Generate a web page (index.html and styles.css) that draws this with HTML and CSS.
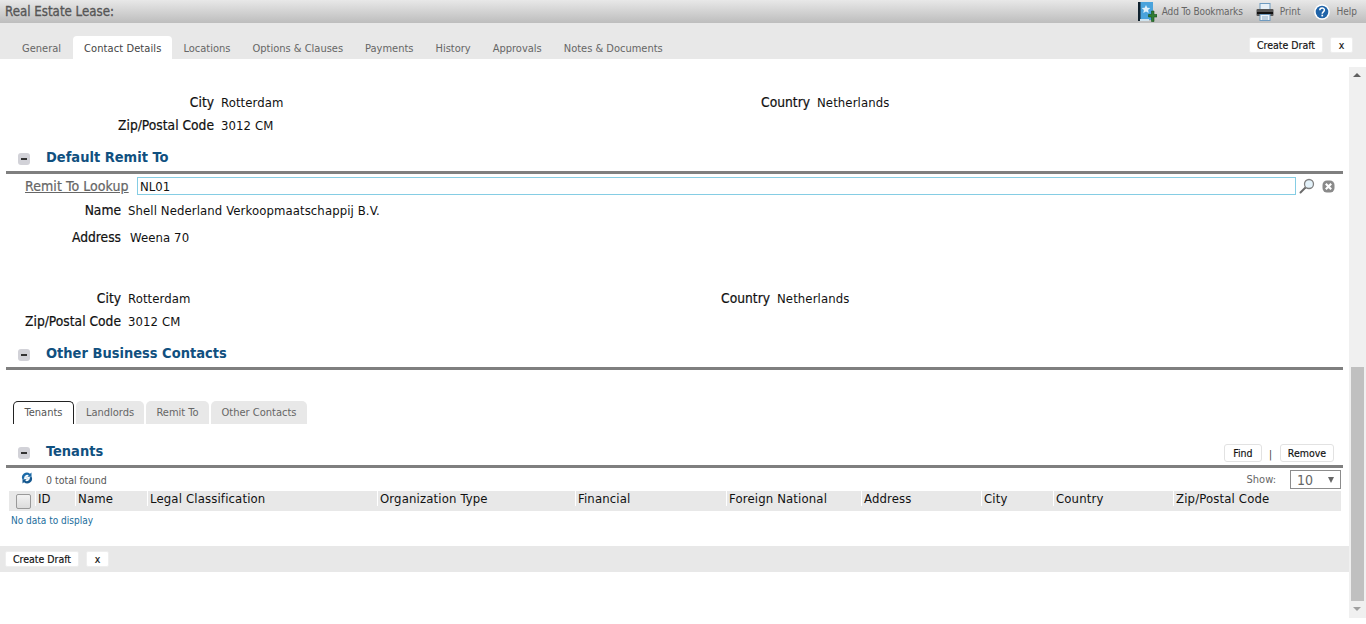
FILE: index.html
```html
<!DOCTYPE html>
<html lang="en">
<head>
    <meta charset="UTF-8">
    <meta name="viewport" content="width=device-width, initial-scale=1.0">
    <title>Real Estate Lease</title>
    <link rel="stylesheet" href="styles.css">
</head>
<body>
    <header class="topbar">
        <div class="page-title">Real Estate Lease:</div>
        <div class="top-links">
            <a class="top-link top-link-book">
                <svg width="19" height="20" viewBox="0 0 19 20"><rect x="1" y="0" width="14" height="18" fill="#4aa3dc"/><rect x="0" y="0" width="2.500" height="19" fill="#10222f"/><rect x="2" y="17" width="9" height="2" fill="#cfe3ef"/><path d="M8 3l1.300 2.800 3 .3-2.200 2 .6 3-2.700-1.500-2.700 1.500.6-3-2.200-2 3-.3z" fill="#dff0fa"/><path d="M10.500 12.500h3v-3.500h2.500v3.500h3v2.500h-3v4.500h-2.500v-4.500h-3z" fill="#2f7d32" stroke="#17501b" stroke-width=".6"/></svg>
                <span class="top-link-text">Add To Bookmarks</span>
            </a>
            <a class="top-link top-link-print">
                <svg width="18" height="18" viewBox="0 0 18 18"><rect x="4" y="0.500" width="10" height="6" fill="#e6eff6" stroke="#6f9bc0"/><rect x="0.500" y="6" width="17" height="7" rx="1" fill="#565656"/><rect x="1" y="9" width="16" height="2" fill="#111"/><rect x="4" y="11.500" width="10" height="6" fill="#eef4f9" stroke="#6f9bc0"/><path d="M6 14h6M6 16h6" stroke="#8aa9c4"/></svg>
                <span class="top-link-text">Print</span>
            </a>
            <a class="top-link top-link-help">
                <svg width="16" height="16" viewBox="0 0 16 16"><circle cx="8" cy="8" r="7.800" fill="#fff"/><circle cx="8" cy="8" r="6.300" fill="#1f63a8"/><path d="M5.800 6.300c0-3 4.600-3 4.600-.2 0 1.800-2.200 1.800-2.200 3.600" fill="none" stroke="#fff" stroke-width="1.500"/><rect x="7.400" y="10.700" width="1.700" height="1.700" fill="#fff"/></svg>
                <span class="top-link-text">Help</span>
            </a>
        </div>
    </header>

    <nav class="tabbar">
        <div class="tabs">
            <a class="tab">General</a>
            <a class="tab tab-active">Contact Details</a>
            <a class="tab">Locations</a>
            <a class="tab">Options &amp; Clauses</a>
            <a class="tab">Payments</a>
            <a class="tab">History</a>
            <a class="tab">Approvals</a>
            <a class="tab">Notes &amp; Documents</a>
        </div>
        <div class="actions">
            <button class="btn btn-draft">Create Draft</button>
            <button class="btn btn-x">x</button>
        </div>
    </nav>

    <div class="body-wrap">
        <main class="content">
            <div class="field-row row-first">
                <span class="label label-wide">City</span>
                <span class="value value-wide">Rotterdam</span>
                <span class="label label-second-wide">Country</span>
                <span class="value">Netherlands</span>
            </div>
            <div class="field-row row-zip">
                <span class="label label-wide">Zip/Postal Code</span>
                <span class="value">3012 CM</span>
            </div>

            <section class="section-head head-remit">
                <span class="toggle"></span>
                <h2>Default Remit To</h2>
            </section>
            <div class="lookup-row">
                <a class="lookup-label">Remit To Lookup</a>
                <input class="lookup-input" type="text" value="NL01">
                <svg class="lookup-icon" width="16" height="16" viewBox="0 0 16 16"><path d="M6.500 9.500L1.500 14.500" stroke="#6b6b6b" stroke-width="2" stroke-linecap="round"/><circle cx="10" cy="6" r="4.500" fill="#e4f2fa" stroke="#808080" stroke-width="1.300"/></svg>
                <svg class="clear-icon" width="13" height="13" viewBox="0 0 13 13"><rect x="0.500" y="0.500" width="12" height="12" rx="4.500" fill="#8a8a8a"/><path d="M3.800 3.800l5.400 5.400M9.200 3.800l-5.400 5.400" stroke="#fff" stroke-width="2.200"/></svg>
            </div>
            <div class="field-row row-name">
                <span class="label label-narrow">Name</span>
                <span class="value">Shell Nederland Verkoopmaatschappij B.V.</span>
            </div>
            <div class="field-row row-address">
                <span class="label label-narrow">Address</span>
                <span class="value value-address">Weena 70</span>
            </div>
            <div class="field-row row-city">
                <span class="label label-narrow">City</span>
                <span class="value value-narrow">Rotterdam</span>
                <span class="label label-second-narrow">Country</span>
                <span class="value">Netherlands</span>
            </div>
            <div class="field-row row-zip">
                <span class="label label-narrow">Zip/Postal Code</span>
                <span class="value">3012 CM</span>
            </div>

            <section class="section-head head-other">
                <span class="toggle"></span>
                <h2>Other Business Contacts</h2>
            </section>

            <div class="subtabs">
                <a class="subtab subtab-active">Tenants</a>
                <a class="subtab subtab-landlords">Landlords</a>
                <a class="subtab subtab-remit">Remit To</a>
                <a class="subtab subtab-other">Other Contacts</a>
            </div>

            <section class="section-head head-tenants">
                <span class="toggle"></span>
                <h2>Tenants</h2>
                <div class="head-actions">
                    <button class="btn btn-outline btn-find">Find</button>
                    <span class="sep">|</span>
                    <button class="btn btn-outline btn-remove">Remove</button>
                </div>
            </section>

            <div class="list-info">
                <svg class="refresh" width="12" height="12" viewBox="0 0 12 12"><path d="M1.500 7.500A4.800 4.800 0 0 1 9 1.800L10.500 .5v4.200H6.300L7.800 3.300A3 3 0 0 0 3.300 6.500z" fill="#1b6aa8"/><path d="M10.500 4.500A4.800 4.800 0 0 1 3 10.200L1.500 11.500V7.300H5.700L4.200 8.700A3 3 0 0 0 8.700 5.500z" fill="#15588f"/><path d="M4.500 4.500l3 3" stroke="#cfe3ef" stroke-width="1.200"/></svg>
                <span class="total">0 total found</span>
                <span class="show-label">Show:</span>
                <div class="show-select"><span>10</span><span class="caret"></span></div>
            </div>

            <div class="grid-head">
                <div class="col col-check"><span class="checkbox"></span></div>
                <div class="col col-id">ID</div>
                <div class="col col-name">Name</div>
                <div class="col col-legal">Legal Classification</div>
                <div class="col col-org">Organization Type</div>
                <div class="col col-fin">Financial</div>
                <div class="col col-foreign">Foreign National</div>
                <div class="col col-addr">Address</div>
                <div class="col col-city">City</div>
                <div class="col col-country">Country</div>
                <div class="col col-zip">Zip/Postal Code</div>
            </div>
            <div class="no-data">No data to display</div>
        </main>

        <div class="scrollbar">
            <span class="arrow arrow-up"></span>
            <div class="track"><div class="thumb"></div></div>
            <span class="arrow arrow-down"></span>
        </div>
    </div>

    <footer class="footbar">
        <button class="btn btn-draft">Create Draft</button>
        <button class="btn btn-x">x</button>
    </footer>
</body>
</html>
```

FILE: styles.css
```css
body {
    margin: 0;
    width: 1366px;
    height: 624px;
    overflow: hidden;
    background-color: #fff;
    font-family: "DejaVu Sans Condensed", "DejaVu Sans", sans-serif;
    font-size: 12px;
    color: #111;
}

/* top bar */
.topbar {
    height: 23px;
    display: flex;
    justify-content: space-between;
    align-items: center;
    background: linear-gradient(#e8e8e8, #bdbdbd);
}
.page-title {
    margin-left: 5px;
    font-size: 13.200px;
    color: #555;
    -webkit-text-stroke: 0.3px #555;
}
.top-links {
    display: flex;
    align-items: center;
    margin-right: 9px;
}
.top-link {
    display: flex;
    align-items: center;
    margin-left: 13px;
}
.top-link svg {
    margin-right: 5px;
}
.top-link-book .top-link-text {
    letter-spacing: -0.1px;
}
.top-link-print svg {
    margin-right: 6px;
}
.top-link-help {
    margin-left: 14px;
}
.top-link-help svg {
    margin-right: 6px;
}
.top-link-text {
    font-size: 10px;
    color: #666;
}

/* main tabs */
.tabbar {
    height: 36px;
    display: flex;
    justify-content: space-between;
    align-items: flex-end;
    background-color: #e8e8e8;
}
.tabs {
    display: flex;
    margin-left: 11px;
}
.tab {
    height: 23px;
    line-height: 25px;
    padding: 0 11px;
    font-size: 11px;
    color: #666;
    border-radius: 4px 4px 0 0;
}
.tab-active {
    margin-left: 1px;
    letter-spacing: 0.1px;
    background-color: #fff;
    color: #444;
}
.actions {
    display: flex;
    gap: 7px;
    margin: 0 13px 6px 0;
}
.btn {
    height: 16px;
    padding: 0;
    border: 1px solid #eee;
    border-radius: 2px;
    background-color: #fff;
    font-family: inherit;
    font-size: 10.500px;
    color: #111;
    -webkit-text-stroke: 0.15px #111;
}
.btn-draft {
    width: 74px;
}
.btn-x {
    width: 23px;
}

/* body */
.body-wrap {
    display: flex;
    height: 487px;
}
.content {
    width: 1349px;
}
.scrollbar {
    width: 17px;
    margin-top: 8px;
    height: 551px;
    display: flex;
    flex-direction: column;
    background-color: #f0f0f0;
    position: relative;
    z-index: 2;
}
.track {
    flex: 1;
    display: flex;
    align-items: flex-end;
    padding: 0 2px;
}
.thumb {
    width: 100%;
    height: 234px;
    background-color: #c0c0c0;
}
.arrow {
    height: 17px;
    position: relative;
}
.arrow::after {
    content: "";
    position: absolute;
    left: 4px;
    top: 6px;
    border-left: 4px solid transparent;
    border-right: 4px solid transparent;
}
.arrow-up::after {
    border-bottom: 4px solid #606060;
}
.arrow-down::after {
    border-top: 4px solid #a0a0a0;
}

/* field rows */
.field-row {
    display: flex;
    font-size: 13px;
    line-height: 16px;
    letter-spacing: 0.1px;
}
.label {
    font-size: 13.700px;
    line-height: 14px;
    letter-spacing: 0;
    text-align: right;
    margin-right: 7px;
    flex-shrink: 0;
    -webkit-text-stroke: 0.2px #111;
}
.label-wide {
    width: 214px;
}
.value-wide {
    width: 396px;
}
.label-second-wide {
    width: 193px;
}
.label-narrow {
    width: 121px;
}
.value-narrow {
    width: 396px;
    flex-shrink: 0;
}
.label-second-narrow {
    width: 246px;
}
.row-first {
    margin-top: 36px;
}
.row-zip {
    margin-top: 7px;
}
.row-name {
    margin-top: 7px;
}
.row-address {
    margin-top: 11px;
}
.value-address {
    margin-left: 2px;
}
.row-city {
    margin-top: 45px;
}

/* section heads */
.section-head {
    display: flex;
    align-items: center;
    height: 24px;
    margin: 0 6px 0 6px;
    padding-left: 12px;
    border-bottom: 3px solid #7f7f7f;
}
.section-head h2 {
    margin: 0 0 4px 16px;
    font-size: 14.500px;
    font-weight: bold;
    color: #10507f;
}
.toggle {
    width: 12px;
    height: 12px;
    border-radius: 3px;
    background-color: #d2d2d8;
    position: relative;
}
.toggle::after {
    content: "";
    position: absolute;
    left: 3px;
    top: 5px;
    width: 6px;
    height: 2px;
    background-color: #333;
}
.head-remit {
    margin-top: 13px;
}
.head-other {
    margin-top: 13px;
}

/* lookup */
.lookup-row {
    display: flex;
    align-items: center;
    height: 22px;
    box-sizing: border-box;
    padding: 2px 0 0 25px;
}
.lookup-label {
    width: 112px;
    flex-shrink: 0;
    font-size: 14px;
    letter-spacing: 0.07px;
    color: #666;
    text-decoration: underline;
    -webkit-text-stroke: 0.2px #666;
}
.lookup-input {
    width: 1159px;
    height: 18px;
    box-sizing: border-box;
    padding: 0 2px;
    border: 1px solid #85cde4;
    font-family: inherit;
    font-size: 13px;
    color: #111;
}
.lookup-icon {
    margin-left: 3px;
}
.clear-icon {
    margin-left: 7px;
}

/* sub tabs */
.subtabs {
    display: flex;
    gap: 2px;
    margin: 31px 0 0 13px;
}
.subtab {
    height: 23px;
    line-height: 24px;
    text-align: center;
    box-sizing: border-box;
    background-color: #e8e8e8;
    border-radius: 5px 5px 0 0;
    font-size: 11px;
    color: #666;
}
.subtab-active {
    width: 61px;
    background-color: #fff;
    border: 1px solid #222;
    border-bottom: none;
    line-height: 22px;
    color: #555;
}
.subtab-landlords {
    width: 68px;
}
.subtab-remit {
    width: 63px;
}
.subtab-other {
    width: 96px;
}

/* tenants */
.head-tenants {
    margin-top: 17px;
}
.head-actions {
    margin-left: auto;
    margin-right: 9px;
    display: flex;
    align-items: center;
}
.btn-outline {
    height: 18px;
    border: 1px solid #e2e2e2;
    border-radius: 3px;
}
.btn-find {
    width: 38px;
}
.btn-remove {
    width: 54px;
}
.sep {
    margin: 3px 8px 0 7px;
    font-size: 10px;
    color: #333;
}
.list-info {
    display: flex;
    align-items: center;
    height: 23px;
    padding-left: 21px;
}
.refresh {
    margin-bottom: 3px;
}
.total {
    margin-left: 13px;
    font-size: 10.500px;
    color: #555;
}
.show-label {
    margin-left: auto;
    font-size: 11px;
    color: #666;
}
.show-select {
    width: 51px;
    height: 19px;
    box-sizing: border-box;
    margin: 0 8px 0 14px;
    padding: 0 6px;
    display: flex;
    justify-content: space-between;
    align-items: center;
    border: 1px solid #8c8c8c;
    font-size: 14px;
    color: #666;
}
.caret {
    border-left: 3px solid transparent;
    border-right: 3px solid transparent;
    border-top: 6px solid #666;
}
.grid-head {
    display: flex;
    height: 20px;
    margin: 0 8px 0 9px;
    background-color: #e8e8e8;
}
.col {
    box-sizing: border-box;
    padding-left: 2px;
    border-left: 1px solid #fff;
    font-size: 13px;
    line-height: 15px;
    height: 15px;
    letter-spacing: 0.150px;
}
.col-check { width: 26px; border-left: none; padding: 3px 0 0 7px; height: 20px; }
.col-id { width: 40px; }
.col-name { width: 72px; }
.col-legal { width: 230px; }
.col-org { width: 198px; }
.col-fin { width: 151px; }
.col-foreign { width: 135px; }
.col-addr { width: 120px; }
.col-city { width: 72px; }
.col-country { width: 120px; }
.col-zip { width: 165px; }
.checkbox {
    display: block;
    width: 13px;
    height: 13px;
    border: 1px solid #999;
    border-radius: 2px;
    background: linear-gradient(#f2f2f2, #dcdcdc);
}
.no-data {
    margin: 3px 0 0 11px;
    font-size: 10px;
    line-height: 13px;
    color: #1a6d9c;
}

/* footer */
.footbar {
    height: 26px;
    margin-right: 17px;
    display: flex;
    align-items: center;
    gap: 7px;
    padding-left: 5px;
    background-color: #e8e8e8;
}
```
